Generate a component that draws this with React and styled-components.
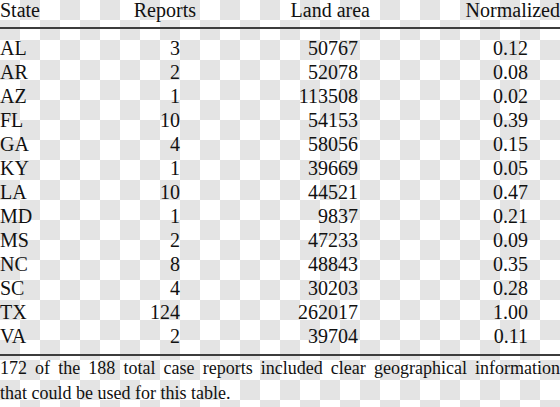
import React from 'react'
import styled, { createGlobalStyle } from 'styled-components'

const GlobalStyle = createGlobalStyle`
  html, body {
    margin: 0;
    padding: 0;
    background: #ffffff;
  }
`

const Frame = styled.div`
  display: flow-root;
  width: 560px;
  height: 407px;
  overflow: hidden;
  background-color: #ffffff;
  background-image:
    linear-gradient(45deg, #e4e4e4 25%, transparent 25%, transparent 75%, #e4e4e4 75%),
    linear-gradient(45deg, #e4e4e4 25%, transparent 25%, transparent 75%, #e4e4e4 75%);
  background-size: 40px 40px;
  background-position: 0 0, 20px 20px;
`

const Page = styled.div`
  margin-top: -2px;
  font-family: "Liberation Serif", "Times New Roman", serif;
  font-size: 20px;
  color: #111;
`

const Row = styled.div`
  display: grid;
  grid-template-columns: 120px 76px 174px 190px;
  line-height: 24px;
  padding-bottom: ${p => p.$gap || 0}px;
`

const Cell = styled.div`
  text-align: ${p => p.$align || 'right'};
  padding-right: ${p => p.$pad || 0}px;
  white-space: nowrap;
`

const Rule = styled.div`
  height: 2px;
  background: #3c3c3c;
  margin-bottom: ${p => p.$after}px;
`

const Body = styled.div`
  padding-bottom: 6px;
`

const Note = styled.div`
  font-size: 18px;
  line-height: 25px;
`

const NoteLine = styled.span`
  display: block;
  text-align: ${p => (p.$justify ? 'justify' : 'left')};
  text-align-last: ${p => (p.$justify ? 'justify' : 'left')};
`

const rows = [
  ['AL', 3, 50767, '0.12'],
  ['AR', 2, 52078, '0.08'],
  ['AZ', 1, 113508, '0.02'],
  ['FL', 10, 54153, '0.39'],
  ['GA', 4, 58056, '0.15'],
  ['KY', 1, 39669, '0.05'],
  ['LA', 10, 44521, '0.47'],
  ['MD', 1, 9837, '0.21'],
  ['MS', 2, 47233, '0.09'],
  ['NC', 8, 48843, '0.35'],
  ['SC', 4, 30203, '0.28'],
  ['TX', 124, 262017, '1.00'],
  ['VA', 2, 39704, '0.11'],
]

const App = () => {
  return (
    <>
      <GlobalStyle />
      <Frame>
        <Page>
          <Row $gap={5}>
            <Cell $align="left">State</Cell>
            <Cell>Reports</Cell>
            <Cell>Land area</Cell>
            <Cell>Normalized</Cell>
          </Row>
          <Rule $after={7} />
          <Body>
            {rows.map(r => (
              <Row key={r[0]}>
                <Cell $align="left">{r[0]}</Cell>
                <Cell $pad={16}>{r[1]}</Cell>
                <Cell $pad={12}>{r[2]}</Cell>
                <Cell $pad={32}>{r[3]}</Cell>
              </Row>
            ))}
          </Body>
          <Rule $after={0} />
          <Note>
            <NoteLine $justify>
              172 of the 188 total case reports included clear geographical information
            </NoteLine>
            <NoteLine>that could be used for this table.</NoteLine>
          </Note>
        </Page>
      </Frame>
    </>
  )
}

export default App
